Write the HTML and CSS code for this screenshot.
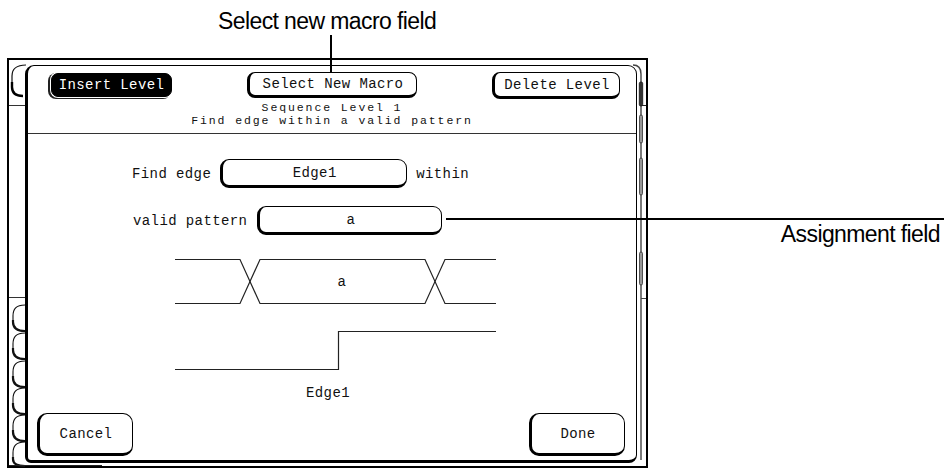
FILE: index.html
```html
<!DOCTYPE html>
<html>
<head>
<meta charset="utf-8">
<link rel="stylesheet" href="styles.css">
</head>
<body>
<div class="figure">
  <div class="frame">
    <div class="left-strip">
      <svg class="strip-svg" width="16" height="406" viewBox="0 0 16 406">
        <path d="M17 5 C8 5 3 8 3 16 V27 C3 33 7 36 14 36" fill="none" stroke="#111" stroke-width="1.2"/>
        <path d="M3 22 V27 C3 33 7 36 14 36" fill="none" stroke="#000" stroke-width="2.4"/>
        <line x1="0" y1="45.5" x2="16" y2="45.5" stroke="#333" stroke-width="1"/>
        <line x1="0" y1="237.5" x2="16" y2="237.5" stroke="#333" stroke-width="1"/>
        <g fill="none" stroke="#111">
          <path d="M16 245 C7 245 4 249 4 256 V262 C4 268 8 271 16 271" stroke-width="1.1"/>
          <path d="M4 260 V262 C4 268 8 271 16 271" stroke-width="2.2"/>
          <path d="M16 273 C7 273 4 277 4 284 V290 C4 296 8 299 16 299" stroke-width="1.1"/>
          <path d="M4 288 V290 C4 296 8 299 16 299" stroke-width="2.2"/>
          <path d="M16 301 C7 301 4 305 4 312 V318 C4 324 8 327 16 327" stroke-width="1.1"/>
          <path d="M4 316 V318 C4 324 8 327 16 327" stroke-width="2.2"/>
          <path d="M16 328 C7 328 4 332 4 339 V345 C4 351 8 354 16 354" stroke-width="1.1"/>
          <path d="M4 343 V345 C4 351 8 354 16 354" stroke-width="2.2"/>
          <path d="M16 355 C7 355 4 359 4 366 V372 C4 378 8 381 16 381" stroke-width="1.1"/>
          <path d="M4 370 V372 C4 378 8 381 16 381" stroke-width="2.2"/>
          <path d="M16 382 C7 382 4 386 4 393 V399 C4 404 8 406 16 406" stroke-width="1.1"/>
          <path d="M4 397 V399 C4 404 8 406 16 406" stroke-width="2.2"/>
        </g>
        <line x1="0" y1="405.5" x2="93" y2="405.5" stroke="#222" stroke-width="1"/>
      </svg>
    </div>
    <div class="dialog">
      <div class="top-row">
        <div class="btn btn-dark">Insert Level</div>
        <div class="btn btn-macro">Select New Macro</div>
        <div class="btn btn-delete">Delete Level</div>
      </div>
      <div class="title">
        <div class="title-line">Sequence Level 1</div>
        <div class="title-line">Find edge within a valid pattern</div>
      </div>
      <div class="separator"></div>
      <div class="form-row row-edge">
        <span class="label">Find edge</span>
        <div class="field field-edge">Edge1</div>
        <span class="label">within</span>
      </div>
      <div class="form-row row-pattern">
        <span class="label">valid pattern</span>
        <div class="field field-pattern">a</div>
      </div>
      <svg class="wave" width="322" height="118" viewBox="0 0 322 118">
        <g fill="none" stroke="#222" stroke-width="1.2">
          <path d="M0 3.5 H65 L85 47.5 H250 L270 3.5 H321"/>
          <path d="M0 47.5 H65 L85 3.5 H250 L270 47.5 H321"/>
          <path d="M0 113.5 H163.5 V75.5 H321"/>
        </g>
        <text x="167" y="30" class="wave-text" text-anchor="middle">a</text>
      </svg>
      <div class="edge-label">Edge1</div>
      <div class="bottom-row">
        <div class="btn btn-big">Cancel</div>
        <div class="btn btn-big">Done</div>
      </div>
    </div>
    <div class="right-strip">
      <svg class="strip-svg" width="9" height="406" viewBox="0 0 9 406">
        <path d="M-4 5 C1 5 4 8 4 14 V400" fill="none" stroke="#444" stroke-width="1.4"/>
        <rect x="2.3" y="22" width="3.4" height="24" rx="1.5" fill="#333" stroke="#111" stroke-width="0.8"/>
        <line x1="4" y1="45.5" x2="9" y2="45.5" stroke="#222" stroke-width="1"/>
        <rect x="2.5" y="55" width="3" height="28" rx="1.5" fill="#999" stroke="#333" stroke-width="0.8"/>
        <rect x="2.5" y="98" width="3" height="37" rx="1.5" fill="#999" stroke="#333" stroke-width="0.8"/>
        <rect x="2.5" y="192" width="3" height="33" rx="1.5" fill="#999" stroke="#333" stroke-width="0.8"/>
        <line x1="4" y1="238.5" x2="9" y2="238.5" stroke="#444" stroke-width="1"/>
      </svg>
    </div>
  </div>

  <div class="callout-text callout-top-text">Select new macro field</div>
  <div class="callout-line callout-top-line"></div>
  <div class="callout-text callout-right-text">Assignment field</div>
  <div class="callout-line callout-right-line"></div>
</div>
</body>
</html>
```

FILE: styles.css
```css
html, body {
  margin: 0;
  padding: 0;
  background: #fff;
}

.figure {
  position: relative;
  width: 944px;
  height: 470px;
  overflow: hidden;
  background: #fff;
  padding-top: 58px;
  padding-left: 7px;
  box-sizing: border-box;
}

.frame {
  width: 641px;
  height: 410px;
  box-sizing: border-box;
  border: 2px solid #000;
  display: flex;
  align-items: flex-start;
}

.left-strip {
  width: 16px;
  flex: none;
  height: 406px;
}

.right-strip {
  flex: 1;
  height: 406px;
}

.strip-svg {
  display: block;
  overflow: visible;
}

.dialog {
  width: 612px;
  height: 398px;
  flex: none;
  margin-top: 5px;
  box-sizing: border-box;
  border-style: solid;
  border-color: #000;
  border-width: 1px 1px 3px 3px;
  border-radius: 9px 9px 8px 6px;
  display: flex;
  flex-direction: column;
  font-family: "Liberation Mono", "DejaVu Sans Mono", monospace;
  font-size: 14px;
  letter-spacing: 0.4px;
  color: #111;
  position: relative;
  z-index: 1;
  background: #fff;
}

.top-row {
  display: flex;
  justify-content: space-between;
  margin-top: 6px;
  padding: 0 16px 0 20px;
}

.btn {
  box-sizing: border-box;
  display: flex;
  align-items: center;
  justify-content: center;
  border-style: solid;
  border-color: #000;
  border-width: 1px 1px 3px 3px;
  border-radius: 8px;
  background: #fff;
  white-space: nowrap;
}

.btn-dark {
  width: 121px;
  height: 24px;
  margin-left: 3px;
  margin-top: 1px;
  background: #000;
  color: #fff;
  border-width: 1px;
  border-radius: 7px;
  box-shadow: 0 0 0 1px #fff, -2px 1px 0 1px #222;
}

.btn-macro {
  width: 170px;
  height: 26px;
}

.btn-delete {
  width: 128px;
  height: 27px;
}

.title {
  margin-top: 2px;
  text-align: center;
}

.title-line {
  font-size: 11.5px;
  letter-spacing: 1.9px;
  line-height: 13px;
}

.separator {
  margin-top: 6px;
  height: 1px;
  background: #333;
}

.form-row {
  display: flex;
  align-items: center;
}

.row-edge {
  margin-top: 25px;
  padding-left: 104px;
  gap: 9px;
}

.row-pattern {
  margin-top: 18px;
  padding-left: 105px;
  gap: 10px;
}

.field {
  box-sizing: border-box;
  height: 29px;
  display: flex;
  align-items: center;
  justify-content: center;
  border-style: solid;
  border-color: #000;
  border-width: 1px 1px 3px 3px;
  border-radius: 9px;
}

.field-edge {
  width: 187px;
}

.field-pattern {
  width: 185px;
}

.wave {
  display: block;
  margin-top: 21px;
  margin-left: 147px;
}

.wave-text {
  font-family: "Liberation Mono", "DejaVu Sans Mono", monospace;
  font-size: 14px;
  fill: #111;
}

.edge-label {
  margin-top: 12px;
  padding-left: 278px;
  line-height: 14px;
}

.bottom-row {
  display: flex;
  justify-content: space-between;
  margin-top: 13px;
  padding: 0 11px 0 9px;
}

.btn-big {
  width: 96px;
  height: 43px;
  border-radius: 10px;
}

.callout-text {
  position: absolute;
  font-family: "Liberation Sans", Arial, sans-serif;
  font-size: 23px;
  letter-spacing: -0.6px;
  line-height: 23px;
  color: #000;
  white-space: nowrap;
  z-index: 3;
}

.callout-top-text {
  left: 218px;
  top: 10px;
}

.callout-right-text {
  right: 4px;
  top: 223px;
}

.callout-line {
  position: absolute;
  background: #000;
  z-index: 3;
}

.callout-top-line {
  left: 330px;
  top: 35px;
  width: 2px;
  height: 37px;
}

.callout-right-line {
  left: 446px;
  top: 218px;
  width: 498px;
  height: 2px;
}
```
